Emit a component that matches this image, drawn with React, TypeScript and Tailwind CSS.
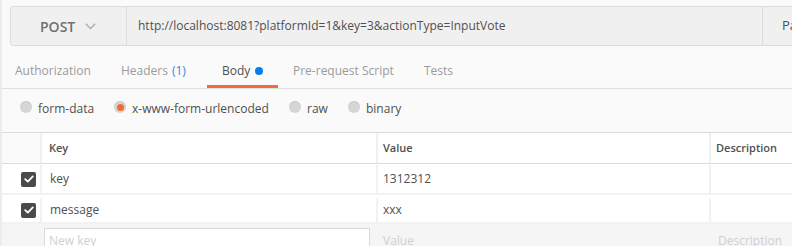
import React from "react";

const tabs = [
  { label: "Authorization", w: "w-[104px] pl-[13px]" },
  { label: "Headers", count: "(1)", w: "w-[101px] pl-[15px]" },
  { label: "Body", active: true, w: "w-[71px] pl-[15px]" },
  { label: "Pre-request Script", w: "w-[131px] pl-[15px]" },
  { label: "Tests", w: "w-[100px] pl-[15px]" },
];

const modes = [
  { label: "form-data", w: "w-[94px]" },
  { label: "x-www-form-urlencoded", w: "w-[175px]", checked: true },
  { label: "raw", w: "w-[59px]" },
  { label: "binary", w: "w-[80px]" },
];

const rows = [
  { k: "key", v: "1312312", h: "h-[31px] pt-[1px]" },
  { k: "message", v: "xxx", h: "h-[29px] pt-[3px]" },
];

function Radio({ checked }: { checked?: boolean }) {
  return (
    <span className="flex h-[12px] w-[12px] items-center justify-center rounded-full bg-[#d6d6d6] shadow-[inset_0_1px_1px_rgba(0,0,0,0.08)]">
      {checked && <span className="h-[7px] w-[7px] rounded-full bg-[#f26a35]" />}
    </span>
  );
}

function Check() {
  return (
    <span className="flex h-[15px] w-[15px] items-center justify-center rounded-[2px] bg-[#4a4a4a]">
      <svg width="10" height="8" viewBox="0 0 10 8" fill="none">
        <path d="M1.2 4.2 L3.8 6.6 L8.8 1.4" stroke="#fff" strokeWidth="1.8" strokeLinecap="round" strokeLinejoin="round" />
      </svg>
    </span>
  );
}

export default function App() {
  return (
    <div className="h-[246px] w-[792px] overflow-hidden border-l-2 border-[#ececec] bg-[#fafafa] font-['Open_Sans',sans-serif] text-[#505050]">
      {/* request bar */}
      <div className="ml-[8px] mt-[6px] flex h-[40px] w-[900px] rounded-[3px] border border-[#dcdcdc] bg-[#f0f0f0]">
        <div className="flex w-[116px] shrink-0 items-center border-r border-[#dcdcdc] pl-[29px]">
          <span className="text-[14px] font-semibold text-[#707070]">POST</span>
          <svg className="ml-[10px]" width="11" height="7" viewBox="0 0 11 7" fill="none">
            <path d="M0.8 0.8 L5.5 5.6 L10.2 0.8" stroke="#a8a8a8" strokeWidth="1.3" />
          </svg>
        </div>
        <div className="flex w-[636px] shrink-0 items-center border-r border-[#dcdcdc] pl-[11px] text-[12px] text-[#505050]">
          http://localhost:8081?platformId=1&amp;key=3&amp;actionType=InputVote
        </div>
        <div className="flex items-center pl-[19px] text-[13px] text-[#505050]">Params</div>
      </div>

      {/* tabs */}
      <div className="mt-[9px] flex border-b border-[#e0e0e0]">
        {tabs.map((t) => (
          <div
            key={t.label}
            className={`${t.w} flex shrink-0 items-center border-b-[3px] pb-[5px] pt-[7px] text-[12px] leading-[18px] ${
              t.active ? "border-[#f26b3a] text-[#505050]" : "border-transparent text-[#9a9a9a]"
            }`}
          >
            {t.label}
            {t.count && <span className="ml-[4px] text-[#2a8ce8]">{t.count}</span>}
            {t.active && <span className="ml-[5px] h-[8px] w-[8px] rounded-full bg-[#097bed]" />}
          </div>
        ))}
      </div>

      {/* body modes */}
      <div className="flex h-[43px] pl-[18px] pt-[11px]">
        {modes.map((m) => (
          <div key={m.label} className={`${m.w} flex h-[18px] shrink-0 items-center gap-[6px] text-[12px]`}>
            <span className="-mt-[4px]">
              <Radio checked={m.checked} />
            </span>
            <span className="text-[#505050]">{m.label}</span>
          </div>
        ))}
      </div>

      {/* key/value table */}
      <div className="border-t border-[#dcdcdc]">
        <div className="grid h-[31px] grid-cols-[38px_336px_333px_1fr] border-b border-[#dcdcdc] text-[11px] font-semibold text-[#505050]">
          <div />
          <div className="flex items-center border-l-2 border-[#f0f0f0] bg-white pl-[7px]">Key</div>
          <div className="flex items-center border-l-2 border-[#f0f0f0] bg-white pl-[5px]">Value</div>
          <div className="flex items-center border-l-2 border-[#f0f0f0] bg-white pl-[5px]">Description</div>
        </div>
        {rows.map((r) => (
          <div
            key={r.k}
            className={`grid ${r.h} grid-cols-[38px_336px_333px_1fr] border-b-2 border-[#f2f2f2] bg-white text-[12px] text-[#505050]`}
          >
            <div className="flex items-center justify-end pr-[4px]">
              <Check />
            </div>
            <div className="flex items-center border-l-2 border-[#f2f2f2] pl-[8px]">{r.k}</div>
            <div className="flex items-center border-l-2 border-[#f2f2f2] pl-[5px]">{r.v}</div>
            <div className="border-l-2 border-[#f2f2f2]" />
          </div>
        ))}
        <div className="grid h-[30px] grid-cols-[38px_336px_333px_1fr] bg-[#f5f5f5] text-[12px] text-[#cfcfcf]">
          <div />
          <div className="pl-[4px] pt-[4px]">
            <div className="h-[26px] w-[326px] border border-[#d8d8d8] bg-white pl-[4px] pt-[3px]">New key</div>
          </div>
          <div className="pl-[7px] pt-[8px]">Value</div>
          <div className="pl-[9px] pt-[8px]">Description</div>
        </div>
      </div>
    </div>
  );
}
